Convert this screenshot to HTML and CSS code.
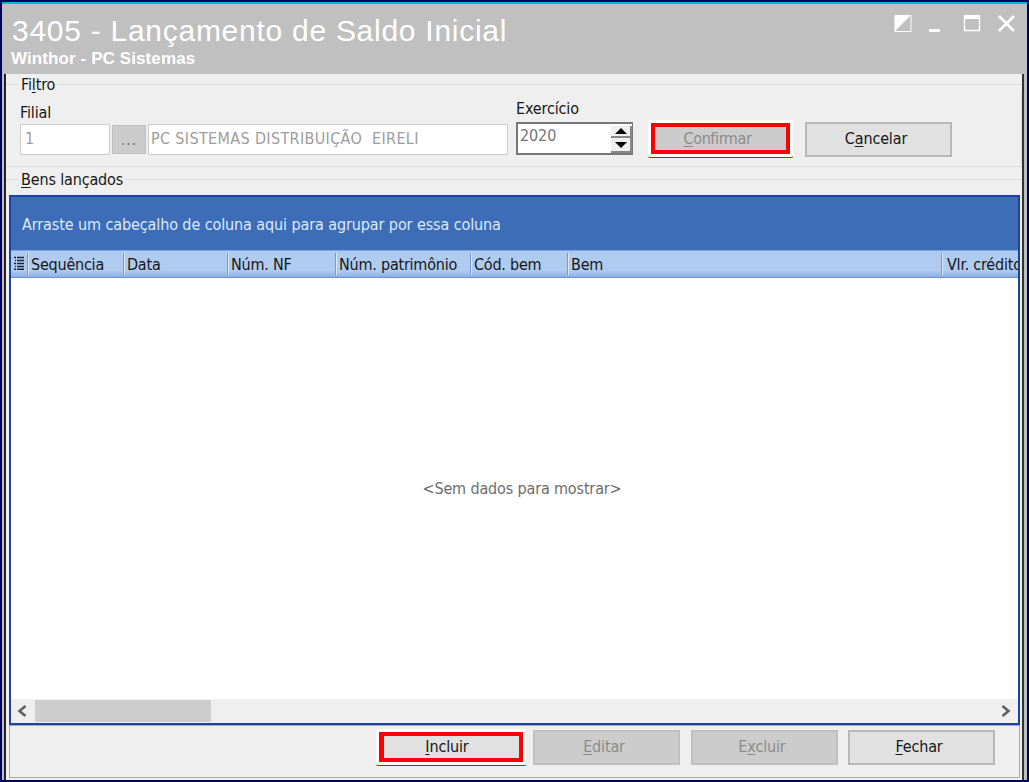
FILE: index.html
```html
<!DOCTYPE html>
<html lang="pt-BR">
  <head>
    <meta charset="UTF-8" />
    <meta name="viewport" content="width=device-width, initial-scale=1.0" />
    <title>3405 - Lançamento de Saldo Inicial</title>
    <link rel="stylesheet" href="styles.css">
  </head>
  <body>
    <div class="window">
      <header class="titlebar">
        <div class="titles">
          <h1>3405 - Lançamento de Saldo Inicial</h1>
          <h2>Winthor - PC Sistemas</h2>
        </div>
        <svg class="controls" width="124" height="20" viewBox="0 0 124 20">
          <path d="M1 1.5h16v16H1z" fill="none" stroke="#fff" />
          <path d="M1 1h16L1 17z" fill="#fff" />
          <path d="M35 15h11v3H35z" fill="#fff" />
          <path d="M70.5 2.5h15v14h-15z" fill="none" stroke="#fff" stroke-width="1.4" />
          <path d="M70 1h16v4H70z" fill="#fff" />
          <path d="M105 2l15 15M120 2l-15 15" stroke="#fff" stroke-width="2.6" />
        </svg>
      </header>

      <main class="client">
        <div class="group-title filter-title"><span>Fi<u>l</u>tro</span></div>
        <div class="filter">
          <div class="field filial">
            <label>Filial</label>
            <div class="field-row">
              <div class="input code">1</div>
              <div class="lookup">...</div>
              <div class="input name"><span>PC SISTEMAS DISTRIBUIÇÃO&nbsp; EIRELI</span></div>
            </div>
          </div>
          <div class="field year">
            <label>Exercício</label>
            <div class="spin">
              <span>2020</span>
              <div class="spin-buttons">
                <div class="spin-btn">
                  <svg width="12" height="6" viewBox="0 0 12 6"><path d="M0 6L6 0l6 6z" /></svg>
                </div>
                <div class="spin-btn">
                  <svg width="12" height="6" viewBox="0 0 12 6"><path d="M0 0l6 6 6-6z" /></svg>
                </div>
              </div>
            </div>
          </div>
          <div class="marked confirm"><button class="btn disabled"><span><u>C</u>onfirmar</span></button></div>
          <button class="btn cancel"><span>C<u>a</u>ncelar</span></button>
        </div>

        <div class="group-title goods-title"><span><u>B</u>ens lançados</span></div>
        <div class="grid">
          <div class="group-panel"><span>Arraste um cabeçalho de coluna aqui para agrupar por essa coluna</span></div>
          <div class="columns">
            <div class="col menu">
              <svg width="10" height="14" viewBox="0 0 10 14">
                <path d="M0 1.500h2m1 0h7M1 4.500h1m1 0h7M0 7.500h2m1 0h7M1 10.500h1m1 0h7M0 13.200h2m1 0h7" stroke="#1d2430" stroke-width="1.5" />
              </svg>
            </div>
            <div class="col seq">Sequência</div>
            <div class="col date">Data</div>
            <div class="col invoice">Núm. NF</div>
            <div class="col asset">Núm. patrimônio</div>
            <div class="col good-code">Cód. bem</div>
            <div class="col good">Bem</div>
            <div class="col credit">Vlr. crédito</div>
          </div>
          <div class="rows"><span>&lt;Sem dados para mostrar&gt;</span></div>
          <div class="scrollbar">
            <svg width="10" height="12" viewBox="0 0 10 12"><path d="M8.500 1L2.500 6l6 5" /></svg>
            <div class="thumb"></div>
            <svg width="10" height="12" viewBox="0 0 10 12"><path d="M1.500 1l6 5-6 5" /></svg>
          </div>
        </div>

        <div class="actions">
          <div class="marked include"><button class="btn"><span><u>I</u>ncluir</span></button></div>
          <button class="btn disabled edit"><span><u>E</u>ditar</span></button>
          <button class="btn disabled delete"><span>E<u>x</u>cluir</span></button>
          <button class="btn close"><span><u>F</u>echar</span></button>
        </div>
      </main>
    </div>
  </body>
</html>
```
FILE: styles.css
```css
* {
  margin: 0;
  padding: 0;
  box-sizing: border-box;
}

body {
  width: 1029px;
  height: 782px;
  overflow: hidden;
  font-family: "DejaVu Sans Condensed", "DejaVu Sans", sans-serif;
  font-stretch: condensed;
  font-size: 16px;
  line-height: 20px;
  letter-spacing: -0.15px;
  color: #171717;
}

u {
  text-decoration-thickness: 1px;
  text-underline-offset: 2px;
}

.window {
  height: 782px;
  border: 2px solid #000060;
  background: #bfbfbf;
}

.titlebar {
  display: flex;
  justify-content: space-between;
  height: 72px;
  padding: 10px 9px 0;
  border-top: 2px solid #00b8cc;
  background: #c0c0c0;
  color: #fff;
  font-family: "Liberation Sans", Arial, sans-serif;
  font-stretch: normal;
}

.titles h1 {
  padding-left: 1px;
  font-size: 30px;
  line-height: 34px;
  font-weight: normal;
  letter-spacing: 0.73px;
}

.titles h2 {
  font-size: 17px;
  line-height: 20px;
  padding-top: 1px;
  letter-spacing: 0.1px;
}

.controls {
  margin-right: 0;
}

.client {
  height: 706px;
  margin: 0 3px 0 2px;
  padding: 0 0 0 1px;
  border-left: 2px solid #222;
  border-right: 2px solid #333;
  background: #efefef;
}

.group-title {
  display: flex;
  align-items: center;
  gap: 2px;
  height: 20px;
}

.group-title span {
  padding-top: 2px;
}

.group-title::before,
.group-title::after {
  content: "";
  height: 1px;
  background: #dcdcdc;
}

.group-title::before {
  width: 12px;
}

.group-title::after {
  flex: 1;
}

.filter {
  display: flex;
  align-items: flex-start;
  height: 73px;
  padding-left: 13px;
  border-bottom: 1px solid #dcdcdc;
  border-right: 1px solid #dcdcdc;
}

.field label {
  display: block;
}

.filial {
  padding-top: 9px;
}

.field-row {
  display: flex;
  align-items: center;
  gap: 2px;
  margin-top: 1px;
}

.input {
  height: 31px;
  padding: 4px;
  border: 1px solid #ccc;
  background: #fff;
  color: #9d9d9d;
}

.code {
  width: 90px;
}

.name {
  width: 360px;
  padding-left: 2px;
  letter-spacing: 0.35px;
}

.lookup {
  width: 34px;
  height: 29px;
  border: 1px solid #bfbfbf;
  background: #ccc;
  color: #777;
  text-align: center;
  line-height: 27px;
  letter-spacing: 1px;
}

.year {
  width: 117px;
  margin-left: 8px;
  padding-top: 5px;
}

.spin {
  display: flex;
  justify-content: space-between;
  height: 33px;
  margin-top: 3px;
  padding: 2px 0 2px 2px;
  border: 2px solid #777;
  border-right-width: 1px;
  background: #fff;
  color: #767676;
  letter-spacing: -0.1px;
}

.spin-buttons {
  width: 21px;
}

.spin-btn {
  display: flex;
  align-items: center;
  justify-content: center;
  height: 12px;
  border-right: 2px solid #888;
  border-bottom: 2px solid #888;
  background: #efefef;
}

.spin-btn + .spin-btn {
  height: 15px;
}

.btn {
  width: 147px;
  height: 35px;
  padding: 0 5px 2px 0;
  border: 2px solid #b8b8b8;
  background: #e1e1e1;
  color: #171717;
  font: inherit;
  letter-spacing: inherit;
}

.btn.disabled {
  border-color: #c0c0c0;
  background: #ccc;
  color: #8b8b8b;
}

.marked {
  border: 3px solid #fff;
  border-radius: 2px;
  box-shadow: 0 1px 0 #f00;
}

.marked .btn {
  display: block;
  width: 100%;
  height: 100%;
  padding: 0 6px 0 0;
  border: 4px solid #f00;
}

.confirm {
  width: 145px;
  height: 37px;
  margin: 26px 0 0 15px;
}

.confirm .btn {
  letter-spacing: -0.4px;
}

.cancel {
  margin: 28px 0 0 12px;
}

.goods-title {
  height: 24px;
  margin-bottom: 4px;
}

.grid {
  display: flex;
  flex-direction: column;
  width: 1011px;
  height: 530px;
  margin-left: 2px;
  border: 2px solid #1c43a4;
  background: #fff;
}

.group-panel {
  height: 53px;
  padding: 18px 0 0 11px;
  background: #3e6db8;
  color: #dce9fc;
  letter-spacing: -0.1px;
}

.columns {
  display: flex;
  align-items: center;
  height: 28px;
  overflow: hidden;
  border-top: 1px solid #82a5dd;
  border-bottom: 1px solid #6d94d4;
  background: linear-gradient(#afcbf0 75%, #8db1e5);
}

.col {
  flex: none;
  height: 22px;
  padding-left: 2px;
  border-left: 1px solid #dbe8fb;
  border-right: 1px solid #7598d8;
  line-height: 24px;
  white-space: nowrap;
  letter-spacing: -0.22px;
}

.menu {
  width: 17px;
  padding: 3px 0 0 3px;
  border-left: none;
}

.menu svg {
  display: block;
}

.seq {
  width: 96px;
}

.date {
  width: 104px;
}

.invoice {
  width: 108px;
}

.asset {
  width: 135px;
}

.good-code {
  width: 97px;
}

.good {
  width: 374px;
}

.credit {
  width: 110px;
  padding-left: 4px;
}

.rows {
  display: flex;
  flex: 1;
  align-items: center;
  justify-content: center;
  padding-left: 15px;
  color: #6d6d6d;
}

.scrollbar {
  display: flex;
  align-items: center;
  height: 24px;
  padding: 0 7px 0 6px;
  background: #efefef;
}

.scrollbar path {
  fill: none;
  stroke: #606060;
  stroke-width: 2.6;
}

.thumb {
  width: 176px;
  height: 22px;
  margin: 0 auto 0 8px;
  background: #cdcdcd;
}

.actions {
  display: flex;
  align-items: flex-start;
  width: 1011px;
  height: 53px;
  margin-left: 2px;
  padding-top: 4px;
  border: 1px solid #aaa;
}

.include {
  width: 150px;
  height: 36px;
  margin: -1px 0 0 366px;
}

.include .btn {
  padding-right: 9px;
  border-left-width: 5px;
}

.edit {
  margin-left: 7px;
}

.delete {
  margin-left: 11px;
}

.close {
  margin-left: 10px;
}
```
